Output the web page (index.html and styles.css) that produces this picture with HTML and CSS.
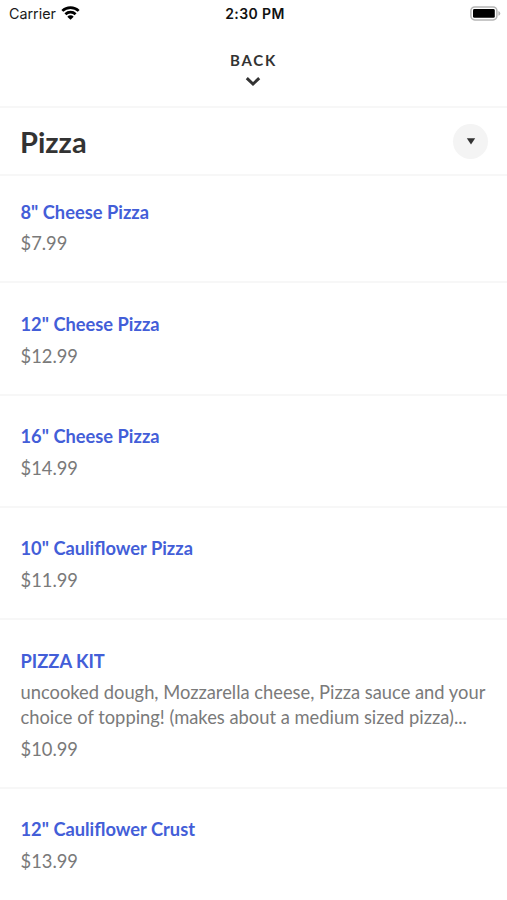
FILE: index.html
```html
<!DOCTYPE html>
<html lang="en">
<head>
<meta charset="utf-8">
<title>Pizza</title>
<link rel="stylesheet" href="styles.css">
</head>
<body>
<div class="status">
  <div class="carrier"><span>Carrier</span>
    <svg class="wifi" width="19" height="14" viewBox="0 0 19 14" fill="none" stroke="#000" stroke-width="2.7"><path d="M1.3 4.9a11.8 11.8 0 0 1 16.4 0M4.4 8.3a7.3 7.3 0 0 1 10.2 0"/><path d="M9.5 13.8 6.3 10.7a4.5 4.5 0 0 1 6.4 0z" fill="#000" stroke="none"/></svg>
  </div>
  <div class="time">2:30 PM</div>
  <svg class="battery" width="31" height="15" viewBox="0 0 31 15"><rect x=".9" y=".9" width="26" height="13" rx="3.8" fill="#fff" stroke="#b5b5b5" stroke-width="1.5"/><rect x="3" y="3" width="21.8" height="8.8" rx="1.4" fill="#000"/><path d="M28.4 5q1.9.8 1.9 2.4t-1.9 2.4z" fill="#b5b5b5"/></svg>
</div>
<header class="back"><span>BACK</span>
  <svg width="16" height="11" viewBox="0 0 16 11" fill="none" stroke="#333" stroke-width="3"><path d="M1.8 2.2 8 8l6.2-5.8"/></svg>
</header>
<div class="category"><h1>Pizza</h1>
  <button class="toggle" aria-label="Choose category"><svg width="10" height="8" viewBox="0 0 10 8"><path d="M.8 1.2h8.4L5 7.6z" fill="#333"/></svg></button>
</div>
<main class="menu">
  <article class="item"><h2>8" Cheese Pizza</h2><p>$7.99</p></article>
  <article class="item"><h2>12" Cheese Pizza</h2><p>$12.99</p></article>
  <article class="item"><h2>16" Cheese Pizza</h2><p>$14.99</p></article>
  <article class="item"><h2>10" Cauliflower Pizza</h2><p>$11.99</p></article>
  <article class="item"><h2>PIZZA KIT</h2><p class="desc">uncooked dough, Mozzarella cheese, Pizza sauce and your<br>choice of topping! (makes about a medium sized pizza)...</p><p>$10.99</p></article>
  <article class="item"><h2>12" Cauliflower Crust</h2><p>$13.99</p></article>
</main>
</body>
</html>
```
FILE: styles.css
```css
* { box-sizing: border-box; margin: 0; padding: 0; }
body { width: 507px; height: 900px; overflow: hidden; background: #fff; font-family: Lato, sans-serif; color: #333; }
.status { height: 27px; display: grid; grid-template-columns: 1fr auto 1fr; align-items: center; padding: 0 6px 0 9px; font-family: Inter, sans-serif; font-size: 14.3px; color: #1a1a1a; }
.carrier { display: flex; align-items: center; gap: 5px; }
.wifi { margin-top: -1px; }
.time { font-size: 14px; font-weight: 600; letter-spacing: .4px; color: #111; }
.battery { justify-self: end; }
.back { height: 81px; border-bottom: 2px solid #f7f7f7; display: flex; flex-direction: column; align-items: center; padding-top: 23px; gap: 6px; font-size: 15px; line-height: 20px; font-weight: 700; letter-spacing: 1.8px; }
.back svg { margin-right: 1px; }
.category { height: 68px; border-bottom: 2px solid #f7f7f7; display: flex; align-items: center; justify-content: space-between; padding: 0 19px 0 20px; }
.category h1 { font-size: 29px; line-height: 34px; font-weight: 700; padding-top: 1px; }
.toggle { width: 35px; height: 35px; border: 0; border-radius: 50%; background: #f4f4f4; display: grid; place-items: center; }
.item { padding: 23.5px 10px 25.4px 20.5px; border-bottom: 2px solid #f7f7f7; }
.item + .item { padding-top: 28.5px; }
.item:last-child { border-bottom: 0; }
.item h2 { font-size: 18.3px; line-height: 24.6px; font-weight: 700; color: #435ed8; }
.item p { font-size: 18.34px; line-height: 24.6px; margin-top: 7.2px; color: #7a7a7a; }
```
